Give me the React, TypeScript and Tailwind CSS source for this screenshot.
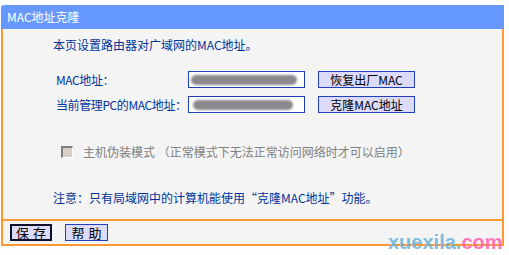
export default function App() {
  const font = { fontFamily: '"Noto Sans CJK SC", "Liberation Sans", sans-serif' };
  return (
    <div className="relative w-[509px] h-[255px] bg-[#fdfdfb] text-[12px] leading-[16px]" style={font}>
      <div className="ml-[1px] pt-[5px] w-[503px]">
        {/* header */}
        <div className="h-[24px] bg-[#6699ff] rounded-tl-[3px] text-white pl-[6px] flex items-center">
          MAC地址克隆
        </div>

        {/* body */}
        <div className="h-[190px] bg-[#f4f4f4] border-l-2 border-r-2 border-[#ff9933] pl-[50px] pt-[8px] text-[#003399]">
          <div>本页设置路由器对广域网的MAC地址。</div>

          <div className="mt-[18px] grid grid-cols-[119px_117px_97px] gap-x-[13px] gap-y-[8px] items-center pl-[3px]">
            <div className="whitespace-nowrap tracking-[-0.4px]">MAC地址：</div>
            <div className="h-[17px] border border-[#1f3fbf] bg-white flex items-center pl-[2px]">
              <div className="h-[10px] w-[106px] rounded-full bg-[#8a8a8e] blur-[1px]" />
            </div>
            <button className="h-[17px] border border-[#1f3fbf] bg-[#dcdcfa] text-black flex items-center justify-center">
              恢复出厂MAC
            </button>

            <div className="whitespace-nowrap tracking-[-0.4px]">当前管理PC的MAC地址：</div>
            <div className="h-[17px] border border-[#1f3fbf] bg-white flex items-center pl-[4px]">
              <div className="h-[10px] w-[100px] rounded-full bg-[#8a8a8e] blur-[1px]" />
            </div>
            <button className="h-[17px] border border-[#1f3fbf] bg-[#dcdcfa] text-black flex items-center justify-center">
              克隆MAC地址
            </button>
          </div>

          <div className="mt-[30px] flex items-center h-[17px] pl-[8px] text-[#808080]">
            <span className="w-[12px] h-[12px] bg-[#d4d0c8] border-t-2 border-l-2 border-[#808080] border-b border-r border-b-white border-r-white" />
            <span className="ml-[10px]">主机伪装模式 （正常模式下无法正常访问网络时才可以启用）</span>
          </div>

          <div className="mt-[30px]">注意：只有局域网中的计算机能使用“克隆MAC地址”功能。</div>
        </div>

        {/* footer */}
        <div className="h-[27px] bg-[#f4f4f4] border-2 border-[#ff9933] flex items-center gap-[13px] pl-[7px]">
          <button className="w-[42px] h-[17px] border-2 border-[#10102a] bg-[#dcdcfa] text-black text-[13px] flex items-center justify-center tracking-[4px] pl-[4px]">
            保存
          </button>
          <button className="w-[43px] h-[17px] border border-[#1f3fbf] bg-[#dcdcfa] text-black text-[13px] flex items-center justify-center tracking-[4px] pl-[4px]">
            帮助
          </button>
        </div>
      </div>

      {/* watermark */}
      <div
        className="absolute left-[388px] top-[230px] text-[20px] leading-[24px] font-bold whitespace-nowrap"
        style={{ fontFamily: '"Liberation Sans", Arial, sans-serif' }}
      >
        <span className="text-[#6fb4dc]/90">xuexila.</span>
        <span className="text-[#ff66b0]/90">com</span>
      </div>
    </div>
  );
}
